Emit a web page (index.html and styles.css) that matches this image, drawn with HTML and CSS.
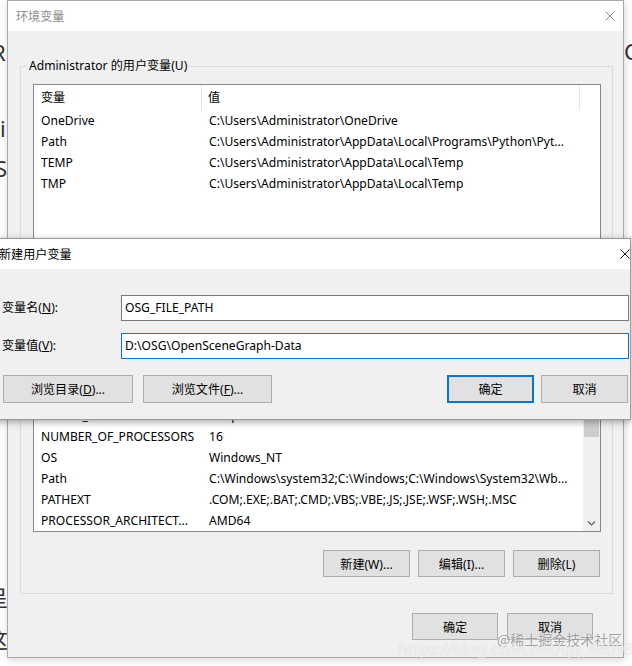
FILE: index.html
```html
<!DOCTYPE html>
<html lang="zh-CN">
<head>
<meta charset="utf-8">
<title>环境变量</title>
<link rel="stylesheet" href="styles.css">
</head>
<body>
<span class="bgtxt bg-r">R</span>
<span class="bgtxt bg-i">i</span>
<span class="bgtxt bg-s">S</span>
<span class="bgtxt bg-c">C</span>
<span class="bgtxt bg-b1">呈</span>
<span class="bgtxt bg-b2">这</span>

<div class="win main">
  <div class="titlebar">
    <span class="title">环境变量</span>
    <svg class="close" width="10" height="10" viewBox="0 0 10 10"><path d="M0.5 0.5L9.5 9.5M9.5 0.5L0.5 9.5" /></svg>
  </div>
  <div class="wbody">
    <fieldset class="group g1">
      <legend>Administrator 的用户变量(U)</legend>
      <div class="list list1">
        <div class="lhead"><span class="c1">变量</span><span class="c2">值</span></div>
        <div class="row"><span class="c1">OneDrive</span><span class="c2">C:\Users\Administrator\OneDrive</span></div>
        <div class="row"><span class="c1">Path</span><span class="c2">C:\Users\Administrator\AppData\Local\Programs\Python\Pyt...</span></div>
        <div class="row"><span class="c1">TEMP</span><span class="c2">C:\Users\Administrator\AppData\Local\Temp</span></div>
        <div class="row"><span class="c1">TMP</span><span class="c2">C:\Users\Administrator\AppData\Local\Temp</span></div>
      </div>
    </fieldset>
    <fieldset class="group g2">
      <legend>系统变量(S)</legend>
      <div class="list list2">
        <div class="cols">
          <div class="lhead"><span class="c1">变量</span><span class="c2">值</span></div>
          <div class="row"><span class="c1">ComSpec</span><span class="c2">C:\Windows\system32\cmd.exe</span></div>
          <div class="row"><span class="c1">DriverData</span><span class="c2">C:\Windows\System32\Drivers\DriverData</span></div>
          <div class="row"><span class="c1">JAVA_HOME</span><span class="c2">C:\Program Files\Java\jdk1.8.0</span></div>
          <div class="row"><span class="c1">MAVEN_HOME</span><span class="c2">C:\apache-maven-3.6.3</span></div>
          <div class="row"><span class="c1">NUMBER_OF_PROCESSORS</span><span class="c2">16</span></div>
          <div class="row"><span class="c1">OS</span><span class="c2">Windows_NT</span></div>
          <div class="row"><span class="c1">Path</span><span class="c2">C:\Windows\system32;C:\Windows;C:\Windows\System32\Wb...</span></div>
          <div class="row"><span class="c1">PATHEXT</span><span class="c2">.COM;.EXE;.BAT;.CMD;.VBS;.VBE;.JS;.JSE;.WSF;.WSH;.MSC</span></div>
          <div class="row"><span class="c1">PROCESSOR_ARCHITECT...</span><span class="c2">AMD64</span></div>
        </div>
        <div class="vscroll">
          <div class="sbtn"></div>
          <div class="track"><div class="thumb"></div></div>
          <div class="sbtn">
            <svg width="17" height="17" viewBox="0 0 17 17"><path d="M5 7.5L8.5 11L12 7.5" /></svg>
          </div>
        </div>
      </div>
      <div class="gbtns">
        <button class="btn">新建(W)...</button>
        <button class="btn">编辑(I)...</button>
        <button class="btn">删除(L)</button>
      </div>
    </fieldset>
    <div class="footer">
      <button class="btn">确定</button>
      <button class="btn">取消</button>
    </div>
  </div>
</div>

<div class="win dialog">
  <div class="titlebar">
    <span class="title">新建用户变量</span>
    <svg class="close" width="10" height="10" viewBox="0 0 10 10"><path d="M0.5 0.5L9.5 9.5M9.5 0.5L0.5 9.5" /></svg>
  </div>
  <div class="dbody">
    <div class="form">
      <label class="lbl">变量名(<u>N</u>):</label>
      <div class="input">OSG_FILE_PATH</div>
      <label class="lbl">变量值(<u>V</u>):</label>
      <div class="input focus">D:\OSG\OpenSceneGraph-Data</div>
    </div>
    <div class="dbtns">
      <div class="left">
        <button class="btn w130">浏览目录(<u>D</u>)...</button>
        <button class="btn w129">浏览文件(<u>F</u>)...</button>
      </div>
      <div class="right">
        <button class="btn def">确定</button>
        <button class="btn">取消</button>
      </div>
    </div>
  </div>
</div>

<div class="wm1">@稀土掘金技术社区</div>
<div class="wm2">https://blog.csdn.net/qq_44093416</div>
</body>
</html>
```

FILE: styles.css
```css
* { box-sizing: border-box; }
html, body { margin: 0; padding: 0; }
body {
  width: 632px;
  height: 666px;
  overflow: hidden;
  position: relative;
  background: #ffffff;
  font-family: "Noto Sans", "Noto Sans CJK SC", sans-serif;
  font-size: 12.1px;
  color: #000;
}

/* fragments of the page behind the windows */
.bgtxt {
  position: absolute;
  font-size: 22px;
  line-height: 1;
  color: #333;
  font-family: "Noto Sans", "Noto Sans CJK SC", sans-serif;
}
.bg-r { left: -8px; top: 41px; }
.bg-i { left: 0px; top: 117px; }
.bg-s { left: -5px; top: 157px; }
.bg-c { left: 624px; top: 40px; }
.bg-b1 { left: -14px; top: 586px; }
.bg-b2 { left: -14px; top: 628px; }

.win {
  position: absolute;
  background: #f0f0f0;
  border: 1px solid #a9a9a9;
  display: flex;
  flex-direction: column;
}
.main {
  left: 7px;
  top: 0;
  width: 617px;
  height: 658px;
  box-shadow: 1px 2px 8px rgba(0, 0, 0, 0.16);
}
.titlebar {
  flex: none;
  height: 30px;
  background: #fff;
  display: flex;
  align-items: center;
  justify-content: space-between;
}
.titlebar .close path { stroke-width: 1; fill: none; }
.main .titlebar { padding: 0 8px 0 8px; color: #8c8c8c; }
.main .titlebar .close path { stroke: #8c8c8c; }

.wbody {
  padding: 27px 10px 0 12px;
  display: flex;
  flex-direction: column;
}
fieldset.group {
  margin: 0;
  min-width: 0;
  border: 1px solid #dcdcdc;
  padding: 10px 11px 10px 12px;
}
fieldset.group legend {
  margin-left: -6px;
  padding: 0 2px;
  line-height: 16px;
  font-size: 12.1px;
}
fieldset.g2 { margin-top: 25px; padding-bottom: 16px; }

.list {
  background: #fff;
  border: 1px solid #828790;
  overflow: hidden;
}
.list1 { height: 170px; }
.list2 { height: 216px; display: flex; }
.list2 .cols { flex: 1; min-width: 0; }

.lhead {
  height: 25px;
  display: flex;
  align-items: stretch;
  line-height: 25px;
}
.lhead .c1 {
  width: 168px;
  padding-left: 7px;
  border-right: 1px solid #e5e5e5;
}
.lhead .c2 {
  width: 378px;
  padding-left: 6px;
  border-right: 1px solid #e5e5e5;
}
.row {
  height: 21px;
  line-height: 21px;
  display: flex;
  white-space: nowrap;
}
.row .c1 { width: 168px; padding-left: 7px; flex: none; overflow: hidden; }
.row .c2 { flex: 1; padding-left: 7px; overflow: hidden; }

.vscroll {
  width: 17px;
  flex: none;
  background: #f0f0f0;
  display: flex;
  flex-direction: column;
}
.sbtn { height: 17px; flex: none; }
.sbtn path { stroke: #606060; stroke-width: 1.2; fill: none; }
.track { flex: 1; padding: 0 1px; }
.thumb {
  margin-top: 61px;
  height: 42px;
  background: #cdcdcd;
}

.btn {
  font-family: "Noto Sans", "Noto Sans CJK SC", sans-serif;
  font-size: 12.1px;
  color: #000;
  background: #e1e1e1;
  border: 1px solid #adadad;
  padding: 0;
  width: 87px;
  height: 27px;
}
.gbtns {
  margin-top: 18px;
  display: flex;
  justify-content: flex-end;
  gap: 8px;
  padding-right: 1px;
}
.footer {
  margin-top: 19px;
  display: flex;
  justify-content: flex-end;
  gap: 9px;
  padding-right: 20px;
}
.footer .btn { width: 86px; }

/* dialog */
.dialog {
  left: -10px;
  top: 238px;
  width: 641px;
  height: 182px;
  border-color: #9b9b9b;
  box-shadow: 0 2px 7px rgba(0, 0, 0, 0.35);
}
.dialog .titlebar { padding: 0 0 0 8px; }
.dialog .titlebar .close path { stroke: #1a1a1a; }
.dbody { padding: 26px 1px 16px 11px; }
.form {
  display: grid;
  grid-template-columns: 119px 1fr;
  grid-auto-rows: 26px;
  row-gap: 12px;
  align-items: center;
}
.lbl { line-height: 16px; }
.input {
  height: 26px;
  border: 1px solid #7a7a7a;
  background: #fff;
  padding-left: 3px;
  line-height: 24px;
  white-space: nowrap;
}
.input.focus { border-color: #0078d7; }
.dbtns {
  margin-top: 16px;
  display: flex;
  justify-content: space-between;
}
.dbtns .btn { height: 28px; }
.dbtns .left { display: flex; gap: 10px; padding-left: 1px; }
.dbtns .right { display: flex; gap: 7px; padding-right: 1px; }
.w130 { width: 130px; }
.w129 { width: 129px; }
.btn.def { border: 2px solid #0078d7; }

/* watermark */
.wm1 {
  position: absolute;
  left: 497px;
  top: 630px;
  font-size: 14px;
  line-height: 18px;
  color: rgba(120, 120, 120, 0.7);
  text-shadow: 0 0 2px #fff;
  font-family: "Noto Sans CJK SC", sans-serif;
}
.wm2 {
  position: absolute;
  left: 398px;
  top: 640px;
  font-size: 16px;
  line-height: 18px;
  color: rgba(255, 255, 255, 0.8);
  text-shadow: 0 0 1px rgba(0, 0, 0, 0.22);
  white-space: nowrap;
}
```
